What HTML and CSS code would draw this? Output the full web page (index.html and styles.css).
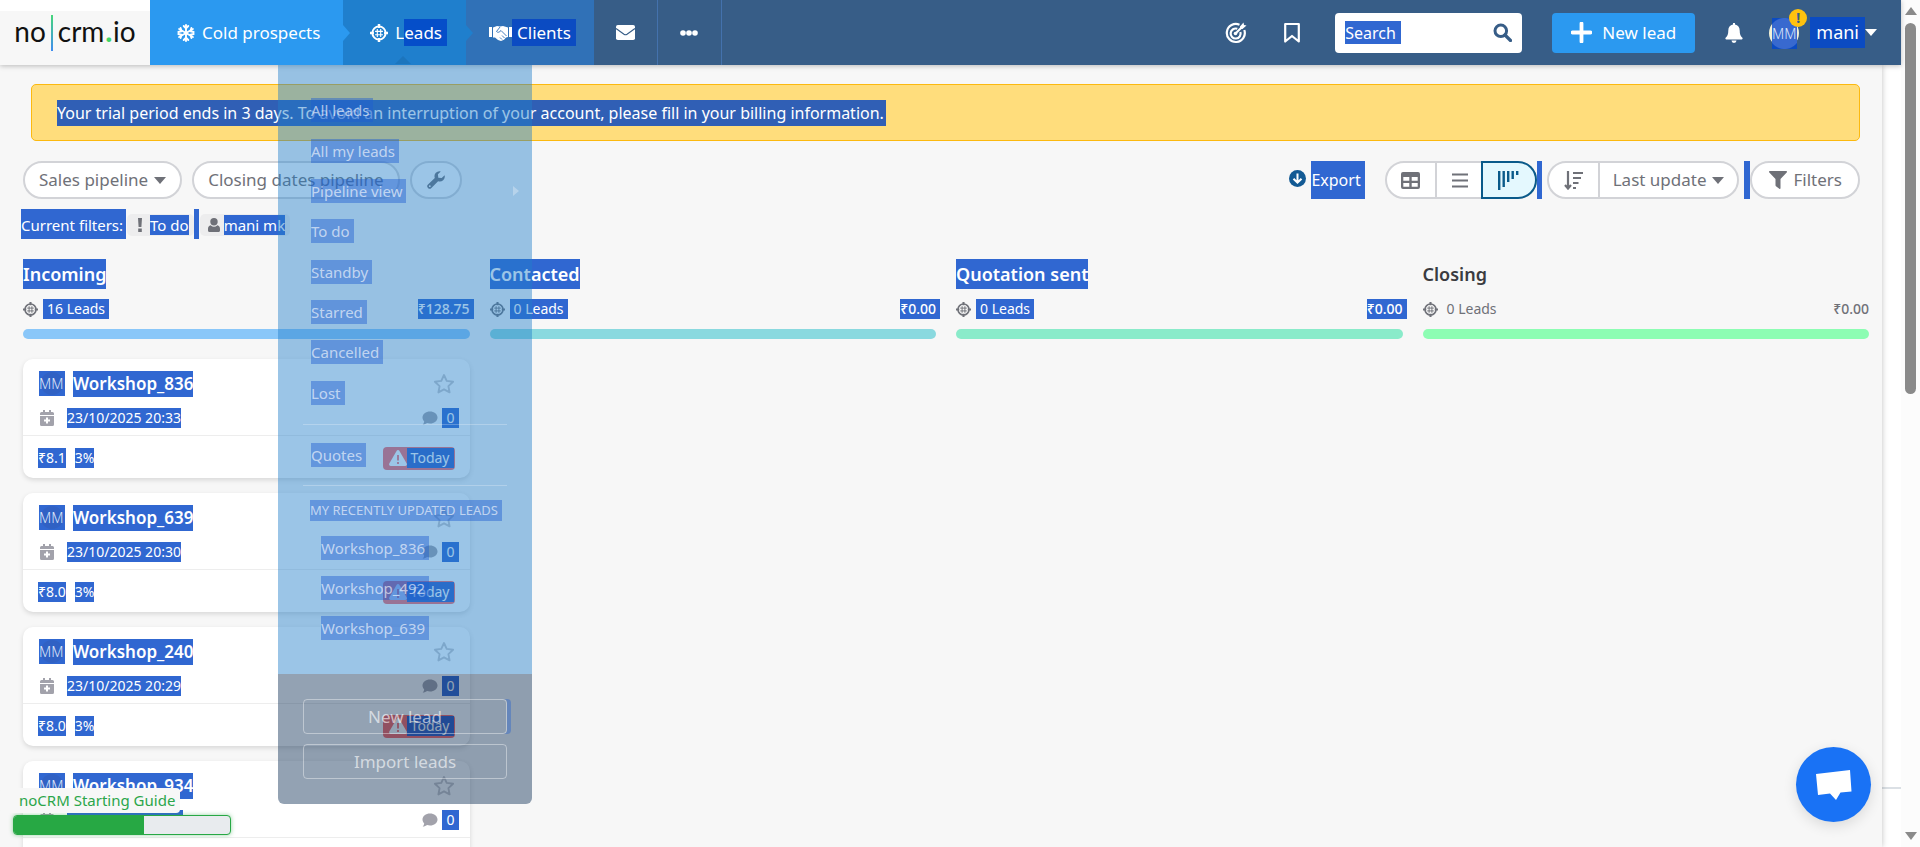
FILE: index.html
```html
<!DOCTYPE html>
<html lang="en">
<head>
<meta charset="utf-8">
<title>noCRM - Leads</title>
<link rel="stylesheet" href="styles.css">
</head>
<body>
<svg class="sprite" aria-hidden="true">
  <symbol id="i-target" viewBox="0 0 16 16"><g fill="none" stroke="currentColor"><circle cx="8" cy="8" r="5.900" stroke-width="1.700"/><path d="M8 0v3.500M8 12.500V16M0 8h3.500M12.500 8H16" stroke-width="2.200"/><path d="M6.500 4.500v7M9.500 4.500v7M4.500 6.500h7M4.500 9.500h7" stroke-width="1"/></g></symbol>
  <symbol id="i-star" viewBox="0 0 22 22"><path d="M11 2l2.700 5.900 6.400.8-4.700 4.400 1.200 6.300L11 16.300l-5.600 3.100 1.200-6.300L1.900 8.700l6.400-.8z" fill="none" stroke="currentColor" stroke-width="1.900" stroke-linejoin="round"/></symbol>
  <symbol id="i-cal" viewBox="0 0 14 16"><path fill="currentColor" d="M3 0h2v2h4V0h2v2h1.500A1.500 1.500 0 0 1 14 3.500V5H0V3.500A1.500 1.500 0 0 1 1.500 2H3z"/><path fill="currentColor" fill-rule="evenodd" d="M0 6h14v8.500a1.500 1.500 0 0 1-1.500 1.500h-11A1.500 1.500 0 0 1 0 14.500zM6 7.500v2H4v2h2v2h2v-2h2v-2H8v-2z"/></symbol>
  <symbol id="i-comment" viewBox="0 0 16 14"><path fill="currentColor" d="M8 .5c4.200 0 7.500 2.600 7.500 6s-3.300 6-7.500 6c-1 0-2-.2-2.900-.5C4 12.900 2.500 13.500.7 13.500c.8-.9 1.400-2 1.500-3.100C1.100 9.300.5 8 .5 6.500c0-3.400 3.300-6 7.500-6z"/></symbol>
  <symbol id="i-warn" viewBox="0 0 18 16"><path fill="#fff" d="M9 0c.6 0 1 .3 1.300.8l7.400 12.700c.6 1.100-.1 2.500-1.400 2.500H1.700C.4 16-.3 14.600.3 13.500L7.700.8C8 .3 8.400 0 9 0z"/><path d="M9 5v5.500M9 12v2" stroke="#fc6b6b" stroke-width="1.800"/></symbol>
</svg>

<div class="window">
  <div class="app">
    <header class="topbar">
      <a class="logo" href="#" aria-label="no crm.io"><span>no</span><i class="logo-bar"></i><span>crm<b>.</b>io</span></a>
      <nav class="nav">
        <a class="nav-item cold" href="#"><svg width="18" height="18" viewBox="0 0 18 18"><g fill="none" stroke="#fff" stroke-width="1.900" stroke-linecap="round"><path d="M9 1v16M2.100 5l13.800 8M15.900 5L2.100 13"/><path d="M6.700 2L9 4.300 11.300 2M6.700 16L9 13.700l2.300 2.300M1.300 8l3.200-.8-.9-3.200M16.700 10l-3.200.8.9 3.200M16.700 8l-3.200-.8.9-3.200M1.300 10l3.200.8-.9 3.200"/></g></svg><span>Cold prospects</span></a>
        <a class="nav-item leads" href="#"><svg width="18" height="18"><use href="#i-target"/></svg><span>L<mark class="tail">eads</mark></span></a>
        <a class="nav-item clients" href="#"><svg width="23" height="16" viewBox="0 0 23 16"><path fill="#fff" d="M0 2h3v10H0zM20 2h3v10h-3zM4 2.500L8 1l3 .6L14 1l5 1.500V12l-2 .5-2 2.300-3 1.200-3-1-3-2.500H4z"/><path d="M11 2L7.500 6.500c1.500 1.600 3 .6 4.500-1l5.500 5.500M11 12.500l2 2M13 10.500l2.500 2.500" fill="none" stroke="#3071b7" stroke-width=".9"/></svg><mark class="pad">Clients</mark></a>
        <a class="nav-item small" href="#" aria-label="Messages"><svg width="19" height="15" viewBox="0 0 19 15"><rect width="19" height="15" rx="1.800" fill="#fff"/><path d="M0 3.500l8 5.800q1.500 1 3 0l8-5.800" fill="none" stroke="#375d87" stroke-width="1.100"/></svg></a>
        <a class="nav-item small" href="#" aria-label="More"><svg width="18" height="6" viewBox="0 0 18 6"><g fill="#fff"><circle cx="3" cy="3" r="2.800"/><circle cx="9" cy="3" r="2.800"/><circle cx="15" cy="3" r="2.800"/></g></svg></a>
      </nav>
      <div class="tools">
        <a class="tool" href="#" aria-label="Goals"><svg width="22" height="22" viewBox="0 0 22 22"><g fill="none" stroke="#fff" stroke-width="2.200"><path d="M14.500 2.800A9 9 0 1 0 19.300 8"/><path d="M12.300 6.800A5 5 0 1 0 15.400 10"/><path d="M10.500 11.500L17 5"/></g><path fill="#fff" d="M15 4.500L18.500.5l.5 2.500 2.500.5-4 3.500H15z"/><circle cx="10.500" cy="11.500" r="1.800" fill="#fff"/></svg></a>
        <a class="tool" href="#" aria-label="Bookmarks"><svg width="18" height="22" viewBox="0 0 18 22"><path d="M2.200 2h13.600v17.500L9 14l-6.800 5.500z" fill="none" stroke="#fff" stroke-width="2.200" stroke-linejoin="round"/></svg></a>
        <form class="search"><input type="text" placeholder="Search" aria-label="Search"><button type="button" aria-label="Run search"><svg width="19" height="19" viewBox="0 0 19 19"><circle cx="7.800" cy="7.800" r="5.800" fill="none" stroke="#375d87" stroke-width="3"/><path d="M12 12l5.500 5.500" stroke="#375d87" stroke-width="3.200" stroke-linecap="round"/></svg></button></form>
        <button class="new-lead" type="button"><svg width="21" height="21" viewBox="0 0 21 21"><path d="M10.500 1.500v18M1.500 10.500h18" stroke="#fff" stroke-width="3.800" stroke-linecap="round"/></svg>New lead</button>
        <a class="bell" href="#" aria-label="Notifications"><svg width="18" height="20" viewBox="0 0 18 20"><path fill="#fff" d="M8 0h2v1.600c3 .6 4.700 2.800 4.700 5.900 0 4 .9 5.800 2.700 7.300.5.500.2 1.700-.7 1.700H1.300c-.9 0-1.200-1.200-.7-1.700 1.800-1.500 2.700-3.300 2.700-7.300C3.300 4.400 5 2.200 8 1.600zM6.500 17.500h5a2.500 2.500 0 0 1-5 0z"/></svg></a>
        <a class="user" href="#"><span class="avatar"><mark>MM</mark><i class="alert">!</i></span><mark class="name">mani</mark><i class="caret"></i></a>
      </div>
    </header>

    <div class="below">
      <main class="content">
        <div class="banner"><mark>Your trial period ends in 3 days. To avoid an interruption of your account, please fill in your billing information.</mark></div>

        <div class="toolbar">
          <button class="pill" type="button">Sales pipeline<i class="caret"></i></button>
          <button class="pill closing" type="button">Closing dates pipeline</button>
          <button class="pill wrench" type="button" aria-label="Settings"><svg width="18" height="18" viewBox="0 0 18 18"><path fill="#6f7178" d="M17.600 4.200a5 5 0 0 1-6.500 6L4.400 17a2.400 2.400 0 0 1-3.400-3.400l6.800-6.700a5 5 0 0 1 6-6.500l-2.900 2.900.4 3.400 3.400.4z"/><circle cx="2.800" cy="15.200" r=".9" fill="#fff"/></svg></button>
          <a class="export" href="#"><svg width="17" height="17" viewBox="0 0 17 17"><circle cx="8.500" cy="8.500" r="8.500" fill="#135a94"/><path d="M8.500 3.500v9M4.500 8.700l4 4 4-4" fill="none" stroke="#fff" stroke-width="2"/></svg><mark>Export</mark></a>
          <div class="group views">
            <button type="button" aria-label="Table view"><svg width="19" height="17" viewBox="0 0 19 17"><path fill="#6f7178" fill-rule="evenodd" d="M2 0h15a2 2 0 0 1 2 2v13a2 2 0 0 1-2 2H2a2 2 0 0 1-2-2V2a2 2 0 0 1 2-2zM2.300 5v3.700h6V5zM10.700 5v3.700h6V5zM2.300 11v3.700h6V11zM10.700 11v3.700h6V11z"/></svg></button>
            <button type="button" aria-label="List view"><svg width="16" height="15" viewBox="0 0 16 15"><path d="M0 1.500h16M0 7.500h16M0 13.500h16" stroke="#6f7178" stroke-width="2.200"/></svg></button>
            <button class="active" type="button" aria-label="Pipeline view"><svg width="21" height="19" viewBox="0 0 21 19"><path d="M1.200 0v19M5.700 0v16M10.200 0v11M14.700 0v8M19.200 0v4" stroke="#0a5a8a" stroke-width="2.400"/></svg></button>
          </div>
          <i class="sel"></i>
          <div class="group sort">
            <button type="button" aria-label="Sort direction"><svg width="19" height="19" viewBox="0 0 19 19"><path d="M4 0v17M1 14l3 3.500L7 14M9 2h10M9 7h8M9 12h5.500M9 17h3" fill="none" stroke="#6f7178" stroke-width="2.200"/></svg></button>
            <button class="update" type="button">Last update<i class="caret"></i></button>
          </div>
          <i class="sel last"></i>
          <button class="pill filter" type="button"><svg width="18" height="18" viewBox="0 0 18 18"><path fill="#6f7178" d="M.8 0h16.400c.8 0 1.100.9.500 1.500L11.500 8v9.200c0 .8-.7 1-1.200.6l-3-2.300c-.5-.3-.8-.7-.8-1.300V8L.3 1.500C-.3.9 0 0 .8 0z"/></svg>Filters</button>
        </div>

        <div class="current">
          <mark class="label">Current filters:</mark>
          <span class="chip"><svg width="6" height="14" viewBox="0 0 6 14"><path fill="#6f7178" d="M1 0h4l-.6 9H1.600zM1.200 10.500h3.600V14H1.200z"/></svg><mark>To do</mark></span>
          <i class="sel"></i>
          <span class="chip"><svg width="12" height="14" viewBox="0 0 12 14"><circle cx="6" cy="3.700" r="3.700" fill="#6f7178"/><path fill="#6f7178" d="M2.600 7.200a5 5 0 0 0 6.800 0C11 7.700 12 9 12 10.700V12.500c0 .8-.6 1.500-1.500 1.500h-9C.6 14 0 13.300 0 12.500v-1.800C0 9 1 7.700 2.600 7.200z"/></svg><mark>mani mk</mark></span>
        </div>

        <div class="board">
          <section class="column incoming">
            <h2><mark>Incoming</mark></h2>
            <div class="stats"><svg width="15" height="15"><use href="#i-target"/></svg><mark class="count">16 Leads</mark><mark class="sum">₹128.75</mark></div>
            <div class="bar"></div>
            <article class="card"><div class="row head"><mark class="mm">MM</mark><mark class="title">Workshop_836</mark><svg class="star" width="22" height="22"><use href="#i-star"/></svg></div><div class="row meta"><svg width="14" height="16"><use href="#i-cal"/></svg><mark>23/10/2025 20:33</mark><svg class="comment" width="16" height="14"><use href="#i-comment"/></svg><mark class="n">0</mark></div><div class="row foot"><mark>₹8.1</mark><mark>3%</mark><span class="tag"><svg width="18" height="16"><use href="#i-warn"/></svg><mark>Today</mark></span></div></article>
            <article class="card"><div class="row head"><mark class="mm">MM</mark><mark class="title">Workshop_639</mark><svg class="star" width="22" height="22"><use href="#i-star"/></svg></div><div class="row meta"><svg width="14" height="16"><use href="#i-cal"/></svg><mark>23/10/2025 20:30</mark><svg class="comment" width="16" height="14"><use href="#i-comment"/></svg><mark class="n">0</mark></div><div class="row foot"><mark>₹8.0</mark><mark>3%</mark><span class="tag"><svg width="18" height="16"><use href="#i-warn"/></svg><mark>Today</mark></span></div></article>
            <article class="card"><div class="row head"><mark class="mm">MM</mark><mark class="title">Workshop_240</mark><svg class="star" width="22" height="22"><use href="#i-star"/></svg></div><div class="row meta"><svg width="14" height="16"><use href="#i-cal"/></svg><mark>23/10/2025 20:29</mark><svg class="comment" width="16" height="14"><use href="#i-comment"/></svg><mark class="n">0</mark></div><div class="row foot"><mark>₹8.0</mark><mark>3%</mark><span class="tag"><svg width="18" height="16"><use href="#i-warn"/></svg><mark>Today</mark></span></div></article>
            <article class="card"><div class="row head"><mark class="mm">MM</mark><mark class="title">Workshop_934</mark><svg class="star" width="22" height="22"><use href="#i-star"/></svg></div><div class="row meta"><svg width="14" height="16"><use href="#i-cal"/></svg><mark class="blank"></mark><svg class="comment" width="16" height="14"><use href="#i-comment"/></svg><mark class="n">0</mark></div><div class="row foot"></div></article>
          </section>
          <section class="column contacted">
            <h2><mark>Contacted</mark></h2>
            <div class="stats"><svg width="15" height="15"><use href="#i-target"/></svg><mark class="count">0 Leads</mark><mark class="sum">₹0.00</mark></div>
            <div class="bar"></div>
          </section>
          <section class="column quotation">
            <h2><mark>Quotation sent</mark></h2>
            <div class="stats"><svg width="15" height="15"><use href="#i-target"/></svg><mark class="count">0 Leads</mark><mark class="sum">₹0.00</mark></div>
            <div class="bar"></div>
          </section>
          <section class="column closing-col">
            <h2>Closing</h2>
            <div class="stats"><svg width="15" height="15"><use href="#i-target"/></svg><span class="count">0 Leads</span><span class="sum">₹0.00</span></div>
            <div class="bar"></div>
          </section>
        </div>
      </main>
      <aside class="edge"></aside>
    </div>

    <div class="menu">
      <div class="menu-body">
        <ul class="links">
          <li><a href="#">All leads</a></li>
          <li><a href="#">All my leads</a></li>
          <li class="sub"><a href="#">Pipeline view</a></li>
          <li><a href="#">To do</a></li>
          <li><a href="#">Standby</a></li>
          <li><a href="#">Starred</a></li>
          <li><a href="#">Cancelled</a></li>
          <li><a href="#">Lost</a></li>
        </ul>
        <div class="quotes"><a href="#">Quotes</a></div>
        <div class="recent">
          <h3><span>MY RECENTLY UPDATED LEADS</span></h3>
          <ul>
            <li><a href="#">Workshop_836</a></li>
            <li><a href="#">Workshop_492</a></li>
            <li><a href="#">Workshop_639</a></li>
          </ul>
        </div>
      </div>
      <div class="actions">
        <button class="first" type="button">New lead</button>
        <button type="button">Import leads</button>
      </div>
    </div>

    <div class="guide">
      <span>noCRM Starting Guide</span>
      <div class="progress" role="progressbar" aria-label="Starting guide" aria-valuenow="60"><div style="width:60%"></div></div>
    </div>

    <button class="chat" type="button" aria-label="Chat"><svg width="38" height="32" viewBox="0 0 38 32"><path fill="#fff" d="M1 5L35 1l1.500 21.500-11 1L21 31l-6-6.500L3 26z"/></svg></button>
  </div>
  <div class="scroll" aria-hidden="true"><i class="up"></i><i class="thumb"></i><i class="down"></i></div>
</div>
</body>
</html>
```
FILE: styles.css
```css
* { box-sizing: border-box; }
body { margin: 0; font: 15px/20px "Noto Sans", "Open Sans", sans-serif; color: #6f7178; background: #f7f7f7; }
a { color: inherit; text-decoration: none; }
ul { list-style: none; margin: 0; padding: 0; }
button, input { font: inherit; }
button { cursor: pointer; }
mark { background: #3067d1; color: #fff; white-space: nowrap; }
svg { display: block; flex: none; }
.sprite { position: absolute; width: 0; height: 0; }
.window { display: flex; height: 100vh; overflow: hidden; }
.app { flex: 1; min-width: 0; position: relative; display: flex; flex-direction: column; }
.caret { display: inline-block; border: 6px solid transparent; border-top: 7px solid currentColor; border-bottom: 0; }
.sel { width: 5px; background: #3067d1; }

/* top bar */
.topbar { display: flex; height: 65px; flex: none; background: #375d87; color: #fff; position: relative; z-index: 2; box-shadow: 0 1px 5px rgba(0,0,0,.25); font-size: 17px; line-height: 27px; }
.logo { width: 150px; display: flex; justify-content: center; align-items: center; gap: 5px; color: #111; background: linear-gradient(#fff 11px, #f7f7f7 11px); font: 28px/36px Lato, sans-serif; padding-bottom: 4px; }
.logo-bar { width: 2px; height: 36px; margin-top: 4px; background: linear-gradient(#45d67a, #3f8cf0); }
.logo b { color: #3fd566; font-weight: 900; padding: 0 1px; }
.nav { display: flex; }
.nav-item { display: flex; align-items: center; gap: 7px; position: relative; }
.cold { padding: 0 23px 0 27px; background: #2b99f0; }
.leads { padding: 0 19px 0 27px; background: #1f7fcd; }
.clients { padding: 0 18px 0 23px; background: #3071b7; gap: 0; }
.cold::after, .leads::after { content: ""; position: absolute; left: 100%; top: 25px; z-index: 1; border: 8px solid transparent; border-left: 7px solid #2b99f0; border-right: 0; }
.leads::after { border-left-color: #1f7fcd; }
.leads::before { content: ""; position: absolute; bottom: 1px; left: 52px; border: 8px solid transparent; border-bottom-color: #1c75bd; border-top: 0; }
.topbar .tail { background: #054ec9; padding-right: 5px; }
.topbar .tail, .topbar .pad { display: inline-block; }
.topbar .pad { background: #0b4bc2; padding: 0 5px; }
.small { width: 64px; justify-content: center; border-right: 1px solid #4472ad; }
.tools { margin-left: auto; display: flex; align-items: center; padding-right: 24px; }
.tool { margin-right: 36px; }
.tool + .tool { margin-right: 34px; }
.search { display: flex; align-items: center; position: relative; margin: 0 30px 0 0; }
.search input { width: 187px; height: 40px; border: 0; border-radius: 4px; padding: 0 40px 0 10px; font-size: 16px; background: linear-gradient(#3067d1, #3067d1) 10px 8px / 56px 23px no-repeat #fff; }
.search input::placeholder { color: #fff; opacity: 1; }
.search button { position: absolute; right: 10px; border: 0; background: none; padding: 0; }
.new-lead { width: 143px; height: 40px; margin-right: 30px; border: 0; border-radius: 4px; background: #2b99f0; color: #fff; display: flex; align-items: center; justify-content: center; gap: 10px; padding: 0; }
.bell { margin-right: 26px; }
.user { display: flex; align-items: center; font-size: 18px; }
.avatar { position: relative; width: 30px; height: 30px; border-radius: 50%; background: #f4f2d6; display: flex; justify-content: center; margin-right: 11px; }
.avatar mark { font-size: 14px; line-height: 31px; height: 31px; background: radial-gradient(circle, #3869cf 15px, #0b4bc2 16px); color: #dbe5fa; font-weight: 300; }
.alert { position: absolute; top: -9px; right: -8px; width: 18px; height: 18px; border-radius: 50%; background: #ffc20e; color: #375d87; font: bold 14px/18px "Noto Sans", sans-serif; text-align: center; }
.name { background: #0b4bc2; padding: 2px 6px; }

/* page */
.below { flex: 1; min-height: 0; display: flex; }
.content { flex: 1; min-width: 0; padding: 19px 13px 0 23px; overflow: hidden; box-shadow: 0 0 6px rgba(0,0,0,.25); position: relative; }
.edge { width: 19px; background: linear-gradient(#dbe0e5, #dbe0e5) 0 722px / 100% 2px no-repeat #fff; }
.banner { margin: 0 9px 20px 8px; height: 57px; border: 1px solid #fcb90f; border-radius: 5px; background: #ffdd7c; padding: 15px 25px; }
.banner mark { display: inline-block; line-height: 26px; padding-right: 2px; font-size: 16px; background: #305fb5; }
.toolbar { display: flex; height: 38px; margin-right: 9px; font-size: 17px; }
.pill, .group { border: 2px solid #d2d3d7; border-radius: 19px; background: #fff; color: #6f7178; }
.pill { display: flex; align-items: center; justify-content: center; gap: 6px; padding: 0 14px; margin-right: 10px; }
.wrench { width: 52px; padding: 0; }
.export { margin-left: auto; margin-right: 20px; display: flex; gap: 5px; }
.export svg { margin-top: 9px; }
.export mark { line-height: 38px; padding-right: 4px; font-size: 16px; }
.group { display: flex; }
.group button { border: 0; background: none; color: inherit; display: flex; align-items: center; justify-content: center; padding: 0; }
.views button { width: 48px; }
.views button + button { border-left: 2px solid #d2d3d7; }
.views .active, .views button + .active { width: 56px; margin: -2px; border: 2px solid #0a5a8a; border-radius: 0 19px 19px 0; background: #e4f8fe; }
.sel { margin-right: 5px; }
.sort button { width: 49px; }
.sort { margin-right: 5px; }
.sort .update { width: auto; gap: 5px; padding: 0 13px; border-left: 2px solid #d2d3d7; }
.sel.last { margin: 0; width: 6px; }
.filter { margin: 0; gap: 7px; padding: 0 16px 0 17px; }
.current { display: flex; align-items: center; height: 30px; margin: 10px 0 20px -2px; }
.current .label { line-height: 28px; padding: 2px 3px 0 0; }
.current .chip { margin-top: 2px; }
.chip { display: flex; align-items: center; background: #ededee; border-radius: 5px; height: 22px; padding: 0 5px 0 10px; gap: 7px; margin-left: 1px; }
.chip + .sel { height: 30px; margin: 0; }
.sel + .chip { padding-left: 8px; gap: 4px; }

/* board */
.board { display: grid; grid-template-columns: repeat(4, 1fr); gap: 20px; }
.column { min-width: 0; }
h2 { margin: 0 0 10px; font-size: 18px; line-height: 30px; font-weight: 600; color: #3a3b40; }
h2 mark { display: inline-block; }
.stats { display: flex; align-items: center; gap: 5px; height: 20px; margin-bottom: 10px; font-size: 14px; }
.stats .count { padding: 0 4px; }
.stats .sum { margin-left: auto; font-weight: 500; }
.stats mark.sum { padding-right: 4px; margin-right: -4px; }
.bar { height: 10px; border-radius: 5px; margin-bottom: 20px; }
.incoming .bar { background: #8ac7f9; }
.contacted .bar { background: #8ad9df; }
.quotation .bar { background: #8aebca; }
.closing-col .bar { background: #8dfdb3; }
.card { height: 119px; border-radius: 10px; background: #fff; box-shadow: 0 2px 5px rgba(0,0,0,.13); margin-bottom: 15px; }
.row { display: flex; align-items: center; padding: 0 16px; }
.head { padding-top: 11px; height: 38px; color: #c9c9cd; }
.mm { width: 26px; line-height: 25px; font-size: 14px; font-weight: 300; color: #dbe5fa; background: radial-gradient(circle at center, #3061c4 11px, #3067d1 12px); }
.title { margin-left: 8px; font-size: 17px; line-height: 26px; font-weight: 600; }
.star { margin-left: auto; margin-right: -1px; }
.meta { height: 39px; border-bottom: 1px solid #ededed; padding: 4px 11px 0 17px; font-size: 14px; color: #a2a2ab; }
.meta mark { margin-left: 13px; }
.blank { width: 116px; height: 20px; }
.comment { margin-left: auto; }
.meta .n { margin-left: 4px; padding: 0 4px; }
.foot { height: 42px; padding: 2px 15px 0; gap: 9px; font-size: 14px; }
.tag { margin-left: auto; display: flex; align-items: center; height: 23px; background: #fc6b6b; border-radius: 4px; padding: 0 1px 0 6px; }
.tag mark { padding: 0 4px; background: #305fc8; }

/* fading dropdown */
.menu { position: absolute; z-index: 3; left: 278px; top: 65px; width: 254px; border-radius: 0 0 6px 6px; overflow: hidden; color: rgba(255,255,255,.62); font-size: 15px; line-height: 24px; }
.menu-body { background: rgba(34,127,202,.45); }
.menu a, .menu h3 span { display: inline-block; background: rgba(32,93,209,.45); padding-right: 4px; }
.links { display: grid; grid-auto-rows: 1fr; align-items: center; height: 348px; padding: 25px 25px 0 33px; margin-bottom: 11px; }
.sub { display: flex; justify-content: space-between; align-items: center; }
.sub::after { content: ""; margin-right: -12px; border: 5px solid transparent; border-left: 6px solid rgba(255,255,255,.3); border-right: 0; }
.quotes { margin: 0 25px; padding: 18px 8px; border: solid rgba(255,255,255,.25); border-width: 1px 0; }
.recent { padding: 14px 28px 34px 32px; }
.recent h3 { margin: 0 0 15px; font-size: 13px; line-height: 21px; font-weight: 400; white-space: nowrap; }
.recent ul { padding-left: 11px; display: grid; gap: 16px; }
.actions { background: rgba(16,49,87,.45); padding: 25px; display: grid; gap: 10px; }
.actions button { height: 35px; border: 1px solid rgba(255,255,255,.4); border-radius: 4px; background: none; color: inherit; font-size: 17px; }
.actions .first { box-shadow: 4px 0 0 rgba(60,110,200,.5); }

/* floating widgets */
.guide { position: absolute; z-index: 4; left: 0; bottom: 12px; width: 231px; color: #2ba64a; font-size: 15px; line-height: 25px; padding-left: 13px; }
.guide span { display: inline-block; margin-left: -13px; padding: 0 5px 0 19px; background: #f7f7f7; border-radius: 4px; }
.progress { height: 20px; margin-top: 2px; border: 1px solid #27a844; border-radius: 4px; background: #e8ebee; overflow: hidden; box-shadow: 0 0 4px rgba(39,168,68,.5); }
.progress div { height: 100%; background: #27a844; }
.chat { position: absolute; z-index: 4; right: 30px; bottom: 25px; width: 75px; height: 75px; border: 0; border-radius: 50%; background: #1972f5; box-shadow: 0 4px 14px rgba(0,0,0,.12); display: flex; align-items: center; justify-content: center; padding: 0; }
.scroll { width: 19px; background: #fcfcfc; display: flex; flex-direction: column; align-items: center; padding: 7px 0; }
.up, .down { border: 6px solid transparent; border-bottom: 8px solid #8a8a8a; border-top: 0; }
.down { border-top: 8px solid #8a8a8a; border-bottom: 0; margin-top: auto; }
.thumb { width: 11px; height: 44.5%; margin-top: 8px; border-radius: 6px; background: #8a8a8a; }
```
